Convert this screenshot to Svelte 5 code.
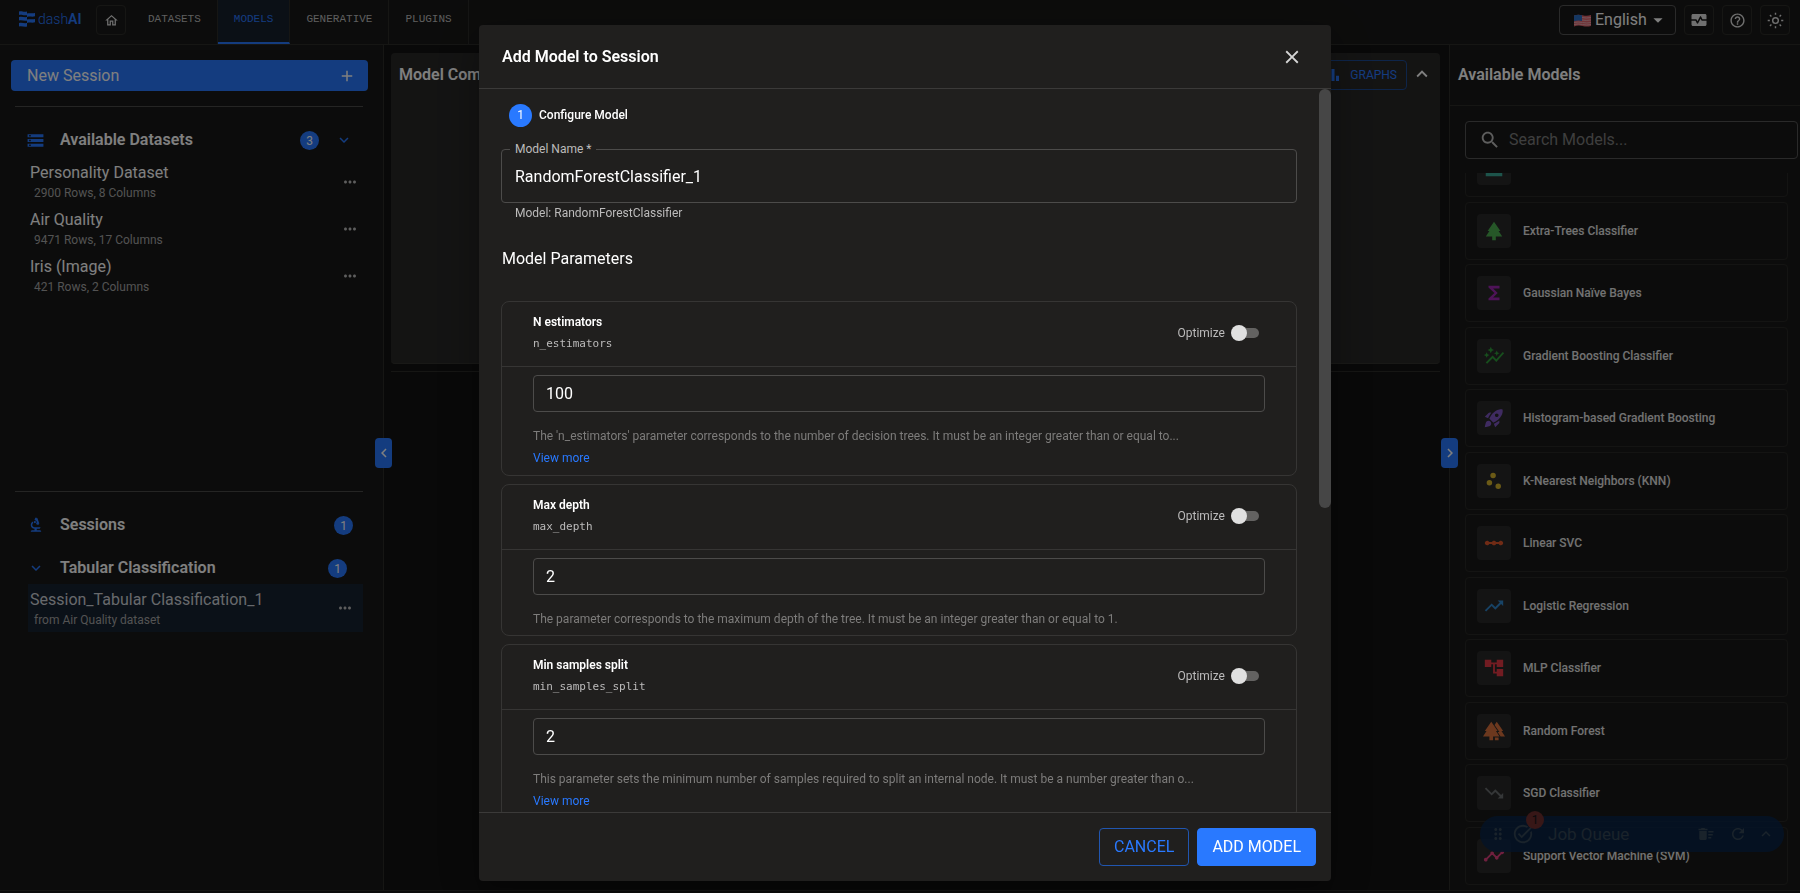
<script>
  const icons = {
    home: 'M12 5.69l5 4.5V18h-2v-6H9v6H7v-7.81l5-4.5M12 3 2 12h3v8h6v-6h2v6h6v-8h3L12 3z',
    add: 'M19 13h-6v6h-2v-6H5v-2h6V5h2v6h6v2z',
    storage: 'M2 20h20v-4H2v4zm2-3h2v2H4v-2zM2 4v4h20V4H2zm4 3H4V5h2v2zm-4 7h20v-4H2v4zm2-3h2v2H4v-2z',
    biotech: 'M7 19c-1.1 0-2 .9-2 2h14c0-1.1-.9-2-2-2h-4v-2h3c1.1 0 2-.9 2-2h-8c-1.66 0-3-1.34-3-3 0-1.09.59-2.04 1.46-2.56C8.17 9.03 8 8.54 8 8c0-.21.04-.42.09-.62C6.28 8.13 5 9.92 5 12c0 2.76 2.24 5 5 5v2H7zM10.56 5.51C11.91 5.54 13 6.64 13 8c0 .75-.33 1.41-.85 1.87l.59 1.62.94-.34.34.94 1.88-.68-.34-.94.94-.34-2.74-7.52-.94.34-.34-.94-1.88.68.34.94-.94.35.56 1.54zM12 8a1.5 1.5 0 1 1-3 0 1.5 1.5 0 0 1 3 0z',
    down: 'M7.41 8.59 12 13.17l4.59-4.58L18 10l-6 6-6-6 1.41-1.41z',
    up: 'M7.41 15.41 12 10.83l4.59 4.58L18 14l-6-6-6 6 1.41 1.41z',
    left: 'M15.41 7.41 14 6l-6 6 6 6 1.41-1.41L10.83 12z',
    right: 'M8.59 16.59 10 18l6-6-6-6-1.41 1.41L13.17 12z',
    dots: 'M6 10c-1.1 0-2 .9-2 2s.9 2 2 2 2-.9 2-2-.9-2-2-2zm12 0c-1.1 0-2 .9-2 2s.9 2 2 2 2-.9 2-2-.9-2-2-2zm-6 0c-1.1 0-2 .9-2 2s.9 2 2 2 2-.9 2-2-.9-2-2-2z',
    search: 'M15.5 14h-.79l-.28-.27C15.41 12.59 16 11.11 16 9.5 16 5.91 13.09 3 9.5 3S3 5.91 3 9.5 5.91 16 9.5 16c1.61 0 3.09-.59 4.23-1.57l.27.28v.79l5 4.99L20.49 19l-4.99-5zm-6 0C7.01 14 5 11.99 5 9.5S7.01 5 9.5 5 14 7.01 14 9.5 11.99 14 9.5 14z',
    caret: 'M7 10l5 5 5-5z',
    chart: 'M4 9h4v11H4zm12 4h4v7h-4zm-6-9h4v16h-4z',
    close: 'M19 6.41 17.59 5 12 10.59 6.41 5 5 6.41 10.59 12 5 17.59 6.41 19 12 13.41 17.59 19 19 17.59 13.41 12z',
    monitor: 'M15.11 12.45 14 10.24l-3.11 6.21c-.16.34-.51.55-.89.55s-.73-.21-.89-.55L7.38 13H2v5c0 1.1.9 2 2 2h16c1.1 0 2-.9 2-2v-5h-6c-.38 0-.73-.21-.89-.55zM20 4H4c-1.1 0-2 .9-2 2v5h6c.38 0 .73.21.89.55L10 13.76l3.11-6.21c.34-.68 1.45-.68 1.79 0L16.62 11H22V6c0-1.1-.9-2-2-2z',
    help: 'M11 18h2v-2h-2v2zm1-16C6.48 2 2 6.48 2 12s4.48 10 10 10 10-4.48 10-10S17.52 2 12 2zm0 18c-4.41 0-8-3.59-8-8s3.59-8 8-8 8 3.59 8 8-3.59 8-8 8zm0-14c-2.21 0-4 1.79-4 4h2c0-1.1.9-2 2-2s2 .9 2 2c0 2-3 1.75-3 5h2c0-2.25 3-2.5 3-5 0-2.21-1.79-4-4-4z',
    layers: 'M3 3h18v4H3zM3 10h18v4H3zM3 17h18v4H3z',
    park: 'M17 12h2L12 2 5.05 12H7l-3.9 6h6.92v4h3.95v-4H21z',
    functions: 'M18 4H6v2l6.5 6L6 18v2h12v-3h-7l5-5-5-5h7z',
    autograph: 'M14.06 9.94 12 9l2.06-.94L15 6l.94 2.06L18 9l-2.06.94L15 12l-.94-2.06zM4 14l.94-2.06L7 11l-2.06-.94L4 8l-.94 2.06L1 11l2.06.94L4 14zm4.5-5 1.09-2.41L12 5.5 9.59 4.41 8.5 2 7.41 4.41 5 5.5l2.41 1.09L8.5 9zm-4 11.5 6-6.01 4 4L23 8.93l-1.41-1.41-7.09 7.97-4-4L3 19l1.5 1.5z',
    rocket: 'M9.19 6.35c-2.04 2.29-3.44 5.58-3.57 5.89L2 10.69l4.05-4.05c.47-.47 1.15-.68 1.81-.55l1.33.26zM11.17 17s3.74-1.55 5.89-3.7c5.4-5.4 4.5-9.62 4.21-10.57-.95-.3-5.17-1.19-10.57 4.21C8.55 9.09 7 12.83 7 12.83L11.17 17zm6.48-2.19c-2.29 2.04-5.58 3.44-5.89 3.57L13.31 22l4.05-4.05c.47-.47.68-1.15.55-1.81l-.26-1.33zM9 18c0 .83-.34 1.58-.88 2.12C6.94 21.3 2 22 2 22s.7-4.94 1.88-6.12C4.42 15.34 5.17 15 6 15c1.66 0 3 1.34 3 3zm4-9c0-1.1.9-2 2-2s2 .9 2 2-.9 2-2 2-2-.9-2-2z',
    scatter: 'M10 14a3 3 0 1 1-6 0 3 3 0 0 1 6 0zM14 6a3 3 0 1 1-6 0 3 3 0 0 1 6 0zM19.6 17.6a3 3 0 1 1-6 0 3 3 0 0 1 6 0z',
    linear: 'M19.5 9.5c-1.03 0-1.9.62-2.29 1.5h-2.92c-.39-.88-1.26-1.5-2.29-1.5s-1.9.62-2.29 1.5H6.79c-.39-.88-1.26-1.5-2.29-1.5C3.12 9.5 2 10.62 2 12s1.12 2.5 2.5 2.5c1.03 0 1.9-.62 2.29-1.5h2.92c.39.88 1.26 1.5 2.29 1.5s1.9-.62 2.29-1.5h2.92c.39.88 1.26 1.5 2.29 1.5 1.38 0 2.5-1.12 2.5-2.5s-1.12-2.5-2.5-2.5z',
    trendUp: 'm16 6 2.29 2.29-4.88 4.88-4-4L2 16.59 3.41 18l6-6 4 4 6.3-6.29L22 12V6z',
    tree: 'M22 11V3h-7v3H9V3H2v8h7V8h2v10h4v3h7v-8h-7v3h-2V8h2v3z',
    forest: 'M16 12 9 2 2 12h1.86L0 18h7v4h4v-4h7l-3.86-6zM20.14 12H22L15 2l-2.39 3.41L17.92 13h-1.95l3.22 5H24zM13 19h4v3h-4z',
    trendDown: 'm16 18 2.29-2.29-4.88-4.88-4 4L2 7.41 3.41 6l6 6 4-4 6.3 6.29L22 12v6z',
    timeline: 'M23 8c0 1.1-.9 2-2 2-.18 0-.35-.02-.51-.07l-3.56 3.55c.05.16.07.34.07.52 0 1.1-.9 2-2 2s-2-.9-2-2c0-.18.02-.36.07-.52l-2.55-2.55c-.16.05-.34.07-.52.07s-.36-.02-.52-.07l-4.55 4.56c.05.16.07.33.07.51 0 1.1-.9 2-2 2s-2-.9-2-2 .9-2 2-2c.18 0 .35.02.51.07l4.56-4.55C8.02 9.36 8 9.18 8 9c0-1.1.9-2 2-2s2 .9 2 2c0 .18-.02.36-.07.52l2.55 2.55c.16-.05.34-.07.52-.07s.36.02.52.07l3.55-3.56C19.02 8.35 19 8.18 19 8c0-1.1.9-2 2-2s2 .9 2 2z',
    drag: 'M11 18c0 1.1-.9 2-2 2s-2-.9-2-2 .9-2 2-2 2 .9 2 2zm-2-8c-1.1 0-2 .9-2 2s.9 2 2 2 2-.9 2-2-.9-2-2-2zm0-6c-1.1 0-2 .9-2 2s.9 2 2 2 2-.9 2-2-.9-2-2-2zm6 4c1.1 0 2-.9 2-2s-.9-2-2-2-2 .9-2 2 .9 2 2 2zm0 2c-1.1 0-2 .9-2 2s.9 2 2 2 2-.9 2-2-.9-2-2-2zm0 6c-1.1 0-2 .9-2 2s.9 2 2 2 2-.9 2-2-.9-2-2-2z',
    task: 'M22 5.18 10.59 16.6l-4.24-4.24 1.41-1.41 2.83 2.83 10-10L22 5.18zm-2.21 5.04c.13.57.21 1.17.21 1.78 0 4.42-3.58 8-8 8s-8-3.58-8-8 3.58-8 8-8c1.58 0 3.04.46 4.28 1.25l1.44-1.44C16.1 2.67 14.13 2 12 2 6.48 2 2 6.48 2 12s4.48 10 10 10 10-4.48 10-10c0-1.19-.22-2.33-.6-3.39l-1.61 1.61z',
    sweep: 'M15 16h4v2h-4zm0-8h7v2h-7zm0 4h6v2h-6zM3 18c0 1.1.9 2 2 2h6c1.1 0 2-.9 2-2V8H3v10zM14 5h-3l-1-1H6L5 5H2v2h12z',
    refresh: 'M17.65 6.35C16.2 4.9 14.21 4 12 4c-4.42 0-7.99 3.58-7.99 8s3.57 8 7.99 8c3.73 0 6.84-2.55 7.73-6h-2.08c-.82 2.33-3.04 4-5.65 4-3.31 0-6-2.69-6-6s2.69-6 6-6c1.66 0 3.14.69 4.22 1.78L13 11h7V4l-2.35 2.35z'
  }

  const tabs = ['Datasets', 'Models', 'Generative', 'Plugins']
  const activeTab = 'Models'

  const datasets = [
    { name: 'Personality Dataset', info: '2900 Rows, 8 Columns' },
    { name: 'Air Quality', info: '9471 Rows, 17 Columns' },
    { name: 'Iris (Image)', info: '421 Rows, 2 Columns' }
  ]

  const models = [
    { name: '', icon: 'layers', color: '#3aa896' },
    { name: 'Extra-Trees Classifier', icon: 'park', color: '#4caf50' },
    { name: 'Gaussian Naïve Bayes', icon: 'functions', color: '#9c27b0' },
    { name: 'Gradient Boosting Classifier', icon: 'autograph', color: '#2e9e3a' },
    { name: 'Histogram-based Gradient Boosting', icon: 'rocket', color: '#7e57c2' },
    { name: 'K-Nearest Neighbors (KNN)', icon: 'scatter', color: '#d6b52c' },
    { name: 'Linear SVC', icon: 'linear', color: '#e0562b' },
    { name: 'Logistic Regression', icon: 'trendUp', color: '#2f86cc' },
    { name: 'MLP Classifier', icon: 'tree', color: '#e53945' },
    { name: 'Random Forest', icon: 'forest', color: '#d9703c' },
    { name: 'SGD Classifier', icon: 'trendDown', color: '#6a6e70' },
    { name: 'Support Vector Machine (SVM)', icon: 'timeline', color: '#e0407f' }
  ]

  let params = $state([
    {
      key: 'n_estimators',
      label: 'N estimators',
      value: '100',
      optimize: false,
      help: "The 'n_estimators' parameter corresponds to the number of decision trees. It must be an integer greater than or equal to...",
      more: true
    },
    {
      key: 'max_depth',
      label: 'Max depth',
      value: '2',
      optimize: false,
      help: 'The parameter corresponds to the maximum depth of the tree. It must be an integer greater than or equal to 1.',
      more: false
    },
    {
      key: 'min_samples_split',
      label: 'Min samples split',
      value: '2',
      optimize: false,
      help: 'This parameter sets the minimum number of samples required to split an internal node. It must be a number greater than o...',
      more: true
    }
  ])

  let modelName = $state('RandomForestClassifier_1')
  let query = $state('')
</script>

{#snippet icon(name, size)}
  <svg class="icon" width={size} height={size} viewBox="0 0 24 24" aria-hidden="true">
    <path d={icons[name]} fill-rule="evenodd" />
  </svg>
{/snippet}

<div class="app">
  <header class="topbar">
    <a class="logo" href="#home" aria-label="dashAI">
      <svg width="17" height="18" viewBox="0 0 17 18" aria-hidden="true">
        <path d="M1 1.500c3-.8 4 .8 8 0v3.500c-4 .8-5-.8-8 0zM9 3.500c3-.8 5 .2 8-.6v3.400c-3 .8-5-.2-8 .6zM1 7c3-.8 5 .6 8 0v3.500c-3 .8-5-.8-8 0zM9 9.500c3-.8 5 .2 8-.6v3.400c-3 .8-5-.2-8 .6zM1 13c3-.8 5 .6 8 0v3.500c-3 .8-5-.8-8 0z" />
      </svg>
      <span>dash<b>AI</b></span>
    </a>
    <button class="square home" aria-label="Home">{@render icon('home', 15)}</button>
    <nav>
      {#each tabs as tab}
        <a href="#{tab}" class:active={tab === activeTab}>{tab}</a>
      {/each}
    </nav>
    <div class="tools">
      <label class="language">
        <svg width="17" height="13" viewBox="0 0 17 13" aria-hidden="true">
          <path d="M0 1.500Q4 0 8.500 1.200T17 1V12Q13 13 8.500 12T0 12.500z" fill="#e0656f" />
          <path d="M8 3.500q4 1 9 0M8 6q4 1 9 0M0 8.500q4-1 8.500 0t8.500 0M0 10.500q4-1 8.500 0t8.500 0" stroke="#e8a9ae" fill="none" />
          <path d="M0 1.500Q4 0 8 1.200V7Q4 6 0 7.300z" fill="#2a6fc4" />
        </svg>
        <select aria-label="Language">
          <option>English</option>
        </select>
        {@render icon('caret', 22)}
      </label>
      <button class="square" aria-label="Hardware monitor">{@render icon('monitor', 18)}</button>
      <button class="square" aria-label="Help">{@render icon('help', 17)}</button>
      <button class="square" aria-label="Toggle theme">
        <svg class="icon" width="17" height="17" viewBox="0 0 24 24" fill="none" stroke="currentColor" stroke-width="2" aria-hidden="true">
          <circle cx="12" cy="12" r="4" />
          <path d="M12 1v3M12 20v3M1 12h3M20 12h3M4.200 4.200l2 2M17.800 17.800l2 2M4.200 19.800l2-2M17.800 6.200l2-2" />
        </svg>
      </button>
    </div>
  </header>

  <div class="columns">
    <aside class="left">
      <button class="new-session">New Session {@render icon('add', 18)}</button>
      <section class="datasets">
        <h2>
          <span class="lead">{@render icon('storage', 19)}</span>
          Available Datasets
          <span class="badge">3</span>
          <button class="bare blue" aria-label="Collapse datasets">{@render icon('down', 18)}</button>
        </h2>
        <ul>
          {#each datasets as dataset}
            <li>
              <div>
                <strong>{dataset.name}</strong>
                <small>{dataset.info}</small>
              </div>
              <button class="bare" aria-label="{dataset.name} options">{@render icon('dots', 18)}</button>
            </li>
          {/each}
        </ul>
      </section>
      <section class="sessions">
        <h2>
          <span class="lead">{@render icon('biotech', 18)}</span>
          Sessions
          <span class="badge">1</span>
        </h2>
        <h2 class="task">
          <span class="lead">{@render icon('down', 18)}</span>
          Tabular Classification
          <span class="badge">1</span>
        </h2>
        <ul>
          <li class="selected">
            <div>
              <strong>Session_Tabular Classification_1</strong>
              <small>from Air Quality dataset</small>
            </div>
            <button class="bare" aria-label="Session options">{@render icon('dots', 18)}</button>
          </li>
        </ul>
      </section>
      <button class="handle" aria-label="Collapse left panel">{@render icon('left', 18)}</button>
    </aside>

    <main>
      <section class="comparison">
        <h2>Model Comparison</h2>
        <button class="graphs">{@render icon('chart', 18)} Graphs</button>
        <button class="bare" aria-label="Collapse comparison">{@render icon('up', 22)}</button>
      </section>
      <section class="runs"></section>
    </main>

    <aside class="right">
      <h2>Available Models</h2>
      <label class="search">
        {@render icon('search', 22)}
        <input type="search" aria-label="Search models" placeholder="Search Models..." bind:value={query} />
      </label>
      <div class="model-scroll">
        <ul>
          {#each models as model}
            <li>
              <span class="tile" style="color: {model.color}">{@render icon(model.icon, 22)}</span>
              {model.name}
            </li>
          {/each}
        </ul>
      </div>
      <button class="handle" aria-label="Collapse right panel">{@render icon('right', 18)}</button>
      <div class="queue">
        {@render icon('drag', 18)}
        <span class="queue-icon">
          {@render icon('task', 22)}
          <span class="count">1</span>
        </span>
        <span class="queue-title">Job Queue</span>
        <button class="bare" aria-label="Clear queue">{@render icon('sweep', 18)}</button>
        <button class="bare" aria-label="Refresh queue">{@render icon('refresh', 18)}</button>
        <button class="bare" aria-label="Expand queue">{@render icon('up', 18)}</button>
      </div>
    </aside>
  </div>
</div>

<div class="backdrop">
  <div class="dialog" role="dialog" aria-modal="true" aria-labelledby="dialog-title">
    <header>
      <h1 id="dialog-title">Add Model to Session</h1>
      <button class="bare" aria-label="Close">{@render icon('close', 22)}</button>
    </header>
    <div class="body">
      <div class="content">
        <p class="step"><span>1</span> Configure Model</p>
        <div class="name-field">
          <label for="model-name">Model Name *</label>
          <input id="model-name" bind:value={modelName} />
        </div>
        <p class="name-help">Model: RandomForestClassifier</p>
        <h2>Model Parameters</h2>
        {#each params as param}
          <section class="param">
            <div class="param-head">
              <div>
                <label class="param-label" for={param.key}>{param.label}</label>
                <code>{param.key}</code>
              </div>
              <label class="optimize">
                Optimize
                <input type="checkbox" role="switch" bind:checked={param.optimize} />
              </label>
            </div>
            <div class="param-body">
              <input id={param.key} bind:value={param.value} />
              <p>{param.help}</p>
              {#if param.more}
                <button class="more">View more</button>
              {/if}
            </div>
          </section>
        {/each}
      </div>
      <div class="scrollbar"><div></div></div>
    </div>
    <footer>
      <button class="cancel">Cancel</button>
      <button class="submit">Add Model</button>
    </footer>
  </div>
</div>

<style>
:global(body) {
  background: #191918;
}
* {
  box-sizing: border-box;
}
.app, .backdrop {
  font-family: Roboto, "Liberation Sans", sans-serif;
  font-size: 16px;
  line-height: 20px;
}
button, input, select {
  font: inherit;
  color: inherit;
}
button {
  padding: 0;
  border: 0;
  background: none;
}
h1, h2, p, ul {
  margin: 0;
  padding: 0;
}
h1, h2 {
  font-size: 16px;
  font-weight: 600;
}
ul {
  list-style: none;
}
.icon {
  display: block;
  flex: none;
  fill: currentColor;
}
.bare {
  display: flex;
}
.app {
  display: flex;
  flex-direction: column;
  height: 100vh;
  overflow: hidden;
  background: #191918;
  color: #fff;
}

.topbar {
  display: flex;
  flex: none;
  height: 45px;
  border-bottom: 1px solid #2c2c29;
}
.logo {
  display: flex;
  align-items: center;
  gap: 3px;
  width: 78px;
  height: 38px;
  margin-left: 18px;
  color: #2979ff;
  font-size: 14px;
  font-weight: 300;
  text-decoration: none;
}
.logo svg {
  flex: none;
  fill: currentColor;
}
.logo b {
  font-weight: 600;
}
.square {
  display: grid;
  place-items: center;
  width: 30px;
  height: 30px;
  margin-top: 5px;
  border: 1px solid #2c2c29;
  border-radius: 4px;
  color: #e0e0e0;
}
.tools .icon[stroke] {
  fill: none;
}
nav {
  display: flex;
  margin-left: 6px;
}
nav a {
  padding: 9px 16px 0;
  border-right: 1px solid #2c2c29;
  color: #bdbdbd;
  font-family: "Liberation Mono", monospace;
  font-size: 11px;
  text-decoration: none;
  text-transform: uppercase;
}
nav a.active {
  border-bottom: 2px solid #2979ff;
  background: #16202c;
  color: #2979ff;
}
.tools {
  display: flex;
  gap: 8px;
  margin-left: auto;
  padding-right: 10px;
}
.language {
  display: flex;
  align-items: center;
  width: 117px;
  height: 30px;
  margin-top: 5px;
  padding: 0 6px 0 14px;
  border: 1px solid #555;
  border-radius: 4px;
}
.language select {
  flex: 1;
  min-width: 0;
  padding: 0 0 0 4px;
  border: 0;
  appearance: none;
  background: none;
}

.columns {
  display: flex;
  flex: 1;
  min-height: 0;
  margin-bottom: 2px;
  border-bottom: 1px solid #2c2c29;
}
.left, .right {
  position: relative;
  display: flex;
  flex-direction: column;
  flex: none;
}
.left {
  width: 384px;
  padding: 15px 15px 0 11px;
  border-right: 1px solid #2c2c29;
}
.new-session {
  display: flex;
  align-items: center;
  justify-content: space-between;
  height: 31px;
  padding: 0 12px 0 16px;
  border-radius: 4px;
  background: #2979ff;
}
.datasets, .sessions {
  margin: 0 5px 0 4px;
  border-top: 1px solid #4a4a48;
}
.datasets {
  height: 385px;
  margin-top: 15px;
  padding-top: 23px;
}
.sessions {
  padding-top: 23px;
}
.left h2 {
  display: flex;
  align-items: center;
  height: 20px;
  padding-right: 10px;
}
.left h2.task {
  margin-top: 23px;
  padding-right: 16px;
}
.lead {
  display: grid;
  place-items: center;
  width: 19px;
  margin: 0 15px 0 11px;
  color: #2979ff;
}
.badge {
  display: grid;
  place-items: center;
  width: 19px;
  height: 19px;
  margin-left: auto;
  border-radius: 50%;
  background: #2979ff;
  font-size: 12px;
  font-weight: 400;
}
.blue {
  margin-left: 16px;
  color: #2979ff;
}
.datasets ul {
  padding-top: 8px;
}
.sessions ul {
  padding-top: 6px;
}
.left li {
  display: flex;
  align-items: center;
  justify-content: space-between;
  height: 47px;
  padding: 0 4px 0 15px;
}
.left li div {
  padding-top: 3px;
}
.left li strong, .left li small {
  display: block;
  font-size: 16px;
  font-weight: 400;
}
.left li small {
  padding-left: 4px;
  color: #a6a6a6;
  font-size: 12px;
}
.left li .bare {
  color: #bdbdbd;
}
.left li.selected {
  height: 48px;
  margin-left: 13px;
  padding: 0 9px 0 2px;
  background: #172230;
  color: #cfd3d8;
}
.handle {
  position: absolute;
  top: 393px;
  right: -9px;
  display: grid;
  place-items: center;
  width: 17px;
  height: 30px;
  border-radius: 4px;
  background: #2979ff;
}

main {
  display: flex;
  flex: 1;
  flex-direction: column;
  gap: 7px;
  min-width: 0;
  padding: 8px 9px 0 7px;
  background: #121212;
}
.comparison {
  display: flex;
  align-items: flex-start;
  height: 311px;
  padding: 7px 7px 7px 8px;
  border-bottom: 1px solid #33332f;
  border-radius: 4px;
  background: #282827;
}
.comparison h2 {
  flex: 1;
  padding-top: 5px;
}
.graphs {
  display: flex;
  align-items: center;
  gap: 8px;
  height: 30px;
  margin-right: 4px;
  padding: 0 9px;
  border: 1px solid #1c4a94;
  border-radius: 4px;
  color: #2979ff;
  font-size: 12px;
  text-transform: uppercase;
}
.comparison .bare {
  padding-top: 3px;
}
.runs {
  flex: 1;
  border-top: 1px solid #2c2c29;
}

.right {
  width: 351px;
  border-left: 1px solid #2c2c29;
}
.right h2 {
  height: 61px;
  padding: 20px 8px;
  border-bottom: 1px solid #2c2c29;
}
.right .handle {
  right: auto;
  left: -9px;
}
.search {
  display: flex;
  align-items: center;
  flex: none;
  gap: 8px;
  height: 38px;
  margin: 15px 2px 14px 15px;
  padding: 0 13px;
  border: 1px solid #555;
  border-radius: 4px;
  color: #bdbdbd;
}
.search input {
  flex: 1;
  min-width: 0;
  padding: 0;
  border: 0;
  background: none;
}
.search input::placeholder {
  color: #7d7d7d;
  opacity: 1;
}
.model-scroll {
  display: flex;
  flex: 1;
  flex-direction: column;
  min-height: 0;
  padding: 0 12px 5px 15px;
  overflow: hidden;
}
.model-scroll ul {
  display: flex;
  flex: 1;
  flex-direction: column;
  justify-content: space-between;
  margin-top: -34px;
}
.model-scroll li {
  display: flex;
  align-items: center;
  flex: none;
  gap: 12px;
  height: 58px;
  padding: 0 11px;
  border: 1px solid #282826;
  border-radius: 4px;
  color: #e4e4e4;
  font-size: 12px;
  font-weight: 500;
}
.tile {
  display: grid;
  place-items: center;
  width: 34px;
  height: 34px;
  border-radius: 4px;
  background: #292929;
}
.queue {
  position: absolute;
  right: 16px;
  bottom: 38px;
  display: flex;
  align-items: center;
  width: 304px;
  height: 36px;
  padding: 0 9px;
  border-radius: 18px;
  background: rgba(9, 38, 75, 0.85);
  color: #344656;
}
.queue .bare {
  margin-left: 14px;
}
.queue .bare:last-child {
  margin-left: 10px;
}
.queue-icon {
  position: relative;
  margin: 0 14px 0 5px;
}
.count {
  position: absolute;
  top: -12px;
  right: -10px;
  width: 18px;
  height: 18px;
  border-radius: 50%;
  background: #6e2e2e;
  color: #101418;
  font-size: 12px;
  line-height: 18px;
  text-align: center;
}
.queue-title {
  flex: 1;
  font-size: 17px;
}

.backdrop {
  position: fixed;
  inset: 0;
  display: flex;
  justify-content: center;
  padding: 25px 0 12px 10px;
  background: rgba(0, 0, 0, 0.5);
  color: #fff;
}
.dialog {
  display: flex;
  flex-direction: column;
  width: 100%;
  max-width: 852px;
  border-radius: 4px;
  background: #201f1e;
  box-shadow: 0 11px 15px -7px rgba(0, 0, 0, 0.2), 0 24px 38px 3px rgba(0, 0, 0, 0.14), 0 9px 46px 8px rgba(0, 0, 0, 0.12);
}
.dialog > header {
  display: flex;
  align-items: center;
  justify-content: space-between;
  flex: none;
  height: 64px;
  padding: 0 28px 0 23px;
  border-bottom: 1px solid #3b3a39;
}
.dialog > header .bare {
  color: #d6d6d6;
}
.body {
  display: flex;
  flex: 1;
  min-height: 0;
  overflow: hidden;
}
.content {
  flex: 1;
  padding: 14px 22px 0;
}
.scrollbar {
  width: 12px;
}
.scrollbar div {
  height: 58%;
  border-radius: 6px;
  background: #464646;
}
.step {
  display: flex;
  align-items: center;
  gap: 7px;
  height: 24px;
  padding-left: 8px;
  font-size: 12px;
  font-weight: 500;
}
.step span {
  display: grid;
  place-items: center;
  width: 23px;
  height: 23px;
  border-radius: 50%;
  background: #2979ff;
  font-weight: 400;
}
.name-field {
  position: relative;
  margin-top: 22px;
}
.name-field label {
  position: absolute;
  top: -10px;
  left: 9px;
  padding: 0 5px;
  background: #201f1e;
  color: #bcbbbb;
  font-size: 12px;
}
.name-field input, .param-body input {
  display: block;
  width: 100%;
  height: 54px;
  padding: 0 13px;
  border: 1px solid #4c4b4a;
  border-radius: 4px;
  background: none;
}
.name-help {
  padding: 0 14px;
  color: #bcbbbb;
  font-size: 12px;
}
.content h2 {
  padding: 26px 0 32px 1px;
  font-weight: 400;
}
.param {
  margin-bottom: 8px;
  border: 1px solid #363534;
  border-radius: 8px;
}
.param-head {
  display: flex;
  align-items: center;
  justify-content: space-between;
  height: 65px;
  padding: 0 37px 2px 31px;
  border-bottom: 1px solid #363534;
}
.param-label, .param code {
  display: block;
  height: 22px;
  font-size: 12px;
  font-weight: 600;
  line-height: 22px;
}
.param code {
  color: #bcbbbb;
  font-family: "DejaVu Sans Mono", monospace;
  font-size: 11px;
  font-weight: 400;
}
.optimize {
  display: flex;
  align-items: center;
  gap: 9px;
  color: #bcbbbb;
  font-size: 12px;
}
/* the thumb hangs over the left end of the track */
.optimize input {
  position: relative;
  width: 25px;
  height: 10px;
  margin: 0;
  border-radius: 5px;
  appearance: none;
  background: #636261;
}
.optimize input::before {
  content: "";
  position: absolute;
  top: -3px;
  left: -3px;
  width: 16px;
  height: 16px;
  border-radius: 50%;
  background: #e0e0e0;
}
.optimize input:checked::before {
  left: 12px;
}
.param-body {
  padding: 8px 31px 6px;
}
.param-body input {
  height: 37px;
  padding: 0 12px;
}
.param-body p {
  margin-top: 14px;
  overflow: hidden;
  color: #7d7c7b;
  font-size: 12px;
  text-overflow: ellipsis;
  white-space: nowrap;
}
.more {
  display: block;
  height: 23px;
  color: #2979ff;
  font-size: 12px;
}
.dialog footer {
  display: flex;
  flex: none;
  gap: 8px;
  justify-content: flex-end;
  height: 69px;
  padding: 15px 15px;
  border-top: 1px solid #3b3a39;
}
.dialog footer button {
  height: 38px;
  padding: 0 14px;
  border: 1px solid #2156b0;
  border-radius: 4px;
  color: #2979ff;
  text-transform: uppercase;
}
.dialog footer .submit {
  border-color: #2979ff;
  background: #2979ff;
  color: #fff;
}
</style>
